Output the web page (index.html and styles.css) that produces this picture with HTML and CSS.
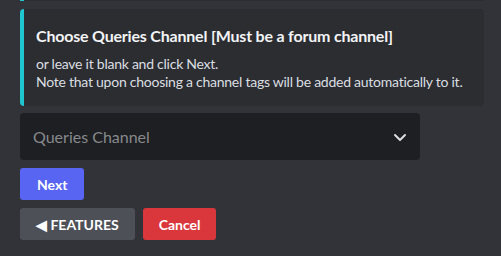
FILE: index.html
```html
<!DOCTYPE html>
<html lang="en">
<head>
    <meta charset="UTF-8">
    <meta name="viewport" content="width=device-width, initial-scale=1.0">
    <title>Setup</title>
    <link rel="stylesheet" href="styles.css">
</head>
<body>
    <div class="prev-embed"></div>
    <div class="embed">
        <div class="embed-title">Choose Queries Channel [Must be a forum channel]</div>
        <div class="embed-desc">or leave it blank and click Next.<br>Note that upon choosing a channel tags will be added automatically to it.</div>
    </div>
    <div class="select">
        <span class="placeholder">Queries Channel</span>
        <svg class="chevron" width="24" height="24" viewBox="0 0 24 24"><path d="M7 10l5 5 5-5" fill="none" stroke="#dbdee1" stroke-width="2" stroke-linecap="round" stroke-linejoin="round"/></svg>
    </div>
    <div class="row">
        <button class="btn btn-primary">Next</button>
    </div>
    <div class="row">
        <button class="btn btn-secondary">&#9664; FEATURES</button>
        <button class="btn btn-danger">Cancel</button>
    </div>
</body>
</html>
```

FILE: styles.css
```css
html, body {
    margin: 0;
    height: 100%;
    overflow: hidden;
}
body {
    background: #313338;
    font-family: Lato, "Noto Sans", sans-serif;
    color: #dbdee1;
    padding: 0 17px 0 20px;
}
.prev-embed {
    height: 1px;
    background: #2b2d31;
    border-left: 4px solid #1fc6cf;
}
.embed {
    margin-top: 8px;
    background: #2b2d31;
    border-left: 4px solid #1fc6cf;
    border-radius: 4px;
    padding: 8px 16px 15px 12px;
}
.embed-title {
    margin-top: 8px;
    font-size: 16px;
    line-height: 22px;
    font-weight: 700;
    letter-spacing: -0.2px;
    color: #f2f3f5;
}
.embed-desc {
    margin-top: 8px;
    font-size: 14px;
    line-height: 18px;
    letter-spacing: -0.25px;
    white-space: nowrap;
    color: #dbdee1;
}
.select {
    margin-top: 7px;
    width: 400px;
    height: 47px;
    box-sizing: border-box;
    background: #1e1f22;
    border-radius: 4px;
    display: flex;
    align-items: center;
    justify-content: space-between;
    padding: 0 8px 0 13px;
}
.placeholder {
    font-size: 16px;
    color: #87898c;
}
.row {
    display: flex;
    gap: 8px;
    margin-top: 8px;
}
.btn {
    height: 32px;
    border: none;
    border-radius: 3px;
    padding: 0 16px;
    font-family: inherit;
    font-size: 14px;
    font-weight: 700;
    color: #fff;
}
.btn-primary {
    background: #5865f2;
    padding: 0 17px;
}
.btn-secondary {
    background: #4e5058;
}
.btn-danger {
    background: #da373c;
}
```
